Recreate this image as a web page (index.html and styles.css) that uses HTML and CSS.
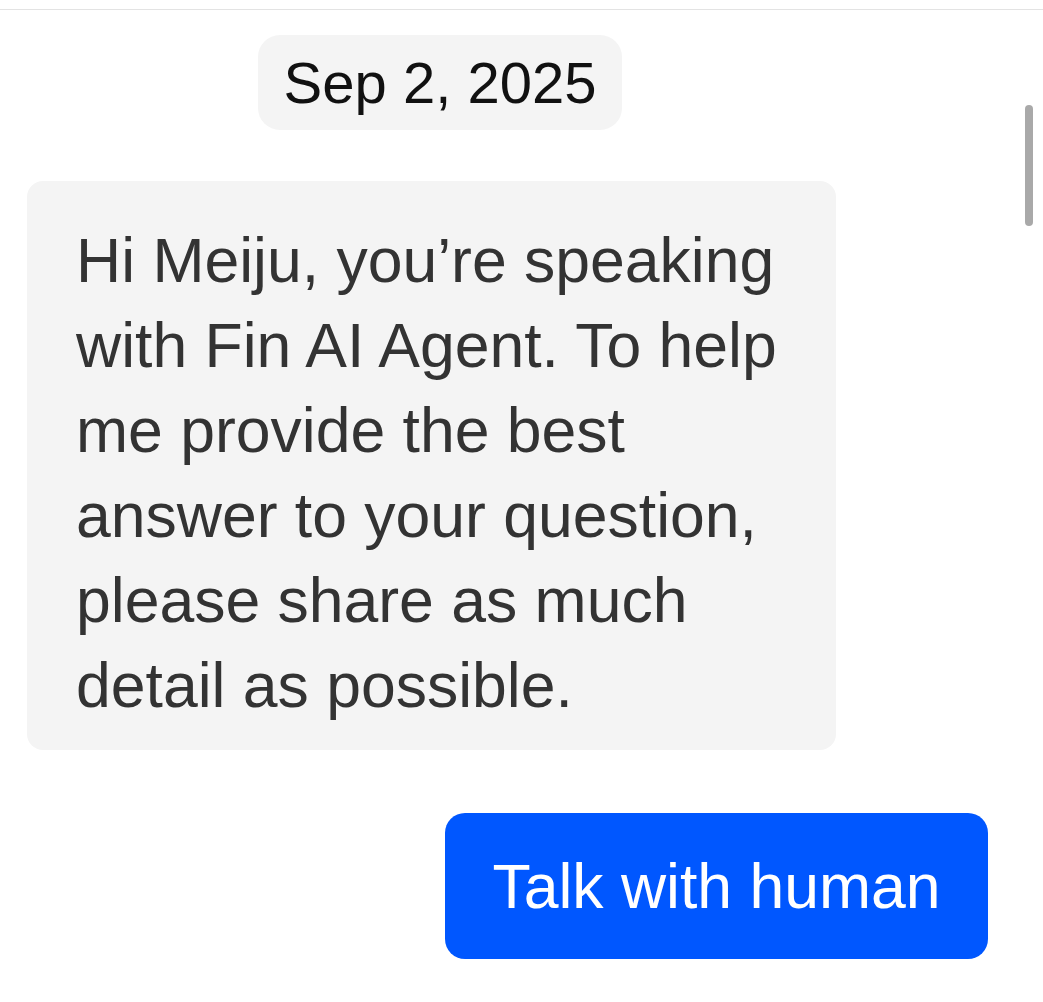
FILE: index.html
```html
<!DOCTYPE html>
<html lang="en">
  <head>
    <meta charset="UTF-8" />
    <meta name="viewport" content="width=device-width, initial-scale=1.0" />
    <title>Chat - Fin AI Agent</title>
    <link rel="stylesheet" href="styles.css">
  </head>
  <body>
    <div class="topbar"></div>

    <div class="conversation">
      <div class="date-pill">Sep 2, 2025</div>

      <div class="bubble">
        Hi Meiju, you’re speaking<br />
        with Fin AI Agent. To help<br />
        me provide the best<br />
        answer to your question,<br />
        please share as much<br />
        detail as possible.
      </div>

      <button class="reply-btn">Talk with human</button>
    </div>

    <!-- overlay scrollbar -->
    <div class="scroll-thumb"></div>
  </body>
</html>
```

FILE: styles.css
```css
body {
  font-family: "Liberation Sans", Arial, sans-serif;
  margin: 0;
  background-color: #ffffff;
  overflow: hidden;
}
.topbar {
  height: 9px;
  border-bottom: 1px solid #e3e3e3;
}
.conversation {
  display: flex;
  flex-direction: column;
  align-items: flex-start;
}
.date-pill {
  margin: 25px 0 0 258px;
  width: 364px;
  height: 95px;
  line-height: 95px;
  text-align: center;
  font-size: 58px;
  color: #111;
  background-color: #f4f4f4;
  border-radius: 22px;
  box-sizing: border-box;
}
.bubble {
  margin: 51px 0 0 27px;
  width: 809px;
  box-sizing: border-box;
  padding: 37px 20px 22px 49px;
  font-size: 62.5px;
  line-height: 85px;
  color: #333;
  white-space: nowrap;
  background-color: #f4f4f4;
  border-radius: 16px;
}
.reply-btn {
  align-self: flex-end;
  margin: 63px 55px 0 0;
  width: 543px;
  height: 146px;
  padding: 0;
  font-family: "Liberation Sans", Arial, sans-serif;
  font-size: 62.5px;
  color: #ffffff;
  background-color: #0057ff;
  border: none;
  border-radius: 20px;
  cursor: pointer;
}
.scroll-thumb {
  position: absolute;
  top: 105px;
  left: 1025px;
  width: 8px;
  height: 121px;
  border-radius: 4px;
  background-color: #a9a9a9;
}
```
